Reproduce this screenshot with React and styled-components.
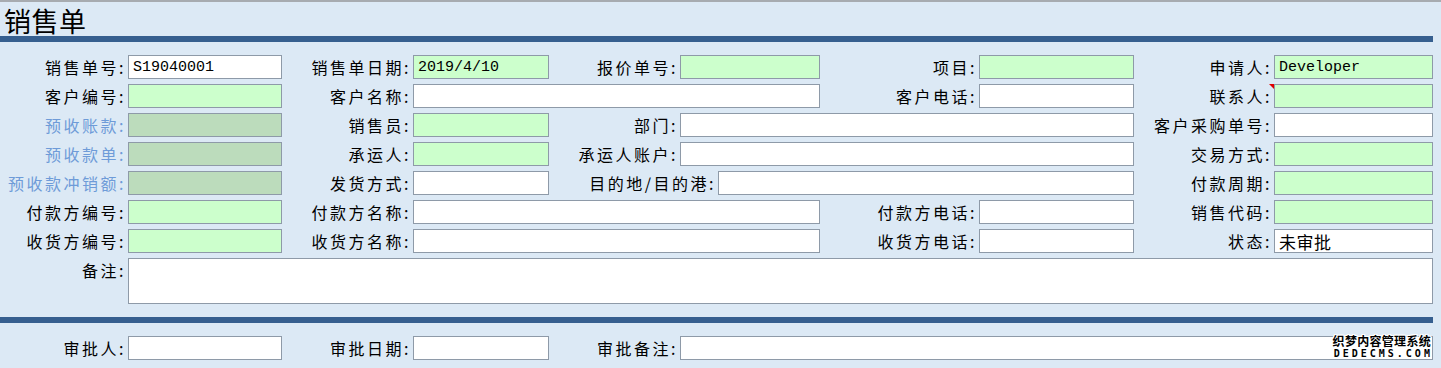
import React from "react";
import styled, { createGlobalStyle, css } from "styled-components";

const Global = createGlobalStyle`
  html, body { margin: 0; padding: 0; background: #dce9f5; }
  body { font-family: "Noto Sans CJK SC", "Noto Sans", sans-serif; }
  * { box-sizing: border-box; }
`;

const COLS = "128px 154px 131px 136px 131px 140px 159px 155px 140px 159px";

const Page = styled.div`
  position: relative;
  width: 1441px;
  height: 368px;
  background: #dce9f5;
  border-top: 2px solid #a7abb0;
  overflow: hidden;
`;

const Title = styled.h1`
  margin: 0;
  height: 34px;
  padding-left: 4px;
  font-family: "Noto Sans CJK SC", sans-serif;
  font-weight: 400;
  font-size: 27px;
  line-height: 38px;
  letter-spacing: 0.5px;
  color: #000;
  overflow: visible;
`;

const Bar = styled.div`
  width: 1433px;
  height: 6px;
  background: #365f8f;
`;

const Section = styled.div`
  padding: 13px 0;
`;

const Grid = styled.div`
  display: grid;
  width: 1433px;
  grid-template-columns: ${COLS};
  grid-auto-rows: 24px;
  grid-template-rows: ${(p) => p.$rows || "24px"};
  row-gap: 5px;
`;

const Label = styled.label`
  position: relative;
  display: flex;
  align-items: center;
  justify-content: flex-end;
  height: 24px;
  padding-right: 2px;
  white-space: nowrap;
  font-family: "Noto Sans CJK SC", sans-serif;
  font-size: 16px;
  letter-spacing: 2.5px;
  color: ${(p) => (p.$muted ? "#6e9bd8" : "#000")};
  ${(p) =>
    p.$flag &&
    css`
      &::after {
        content: "";
        position: absolute;
        right: 0;
        top: 0;
        width: 0;
        height: 0;
        border-top: 5px solid #e00000;
        border-left: 5px solid transparent;
      }
    `}
`;

const tones = {
  white: "#ffffff",
  green: "#ccffcc",
  dark: "#bcdcbc",
};

const Field = styled.input`
  grid-column: span ${(p) => p.$span || 1};
  width: ${(p) => (p.$w ? `${p.$w}px` : "100%")};
  height: 24px;
  margin: 0;
  padding: 1px 4px 0;
  border: 1px solid #8e9aa8;
  border-radius: 0;
  background: ${(p) => tones[p.$tone || "white"]};
  font-family: "Liberation Mono", "Noto Sans CJK SC", monospace;
  font-size: ${(p) => p.$size || 15}px;
  letter-spacing: ${(p) => (p.$size ? "0.5px" : "0")};
  color: #000;
  outline: none;
`;

const Memo = styled.textarea`
  grid-column: span 9;
  width: 100%;
  height: 46px;
  margin: 0;
  padding: 2px 4px;
  border: 1px solid #8e9aa8;
  background: #fff;
  resize: none;
  font-family: "Liberation Mono", "Noto Sans CJK SC", monospace;
  font-size: 15px;
`;

const Pair = styled.div`
  grid-column: span ${(p) => p.$span || 1};
  display: flex;
  justify-content: flex-end;
  align-items: center;
`;

const Watermark = styled.div`
  position: absolute;
  right: 10px;
  bottom: 9px;
  display: flex;
  flex-direction: column;
  align-items: center;
  line-height: 1;
  color: #000;
  font-weight: 700;
  text-shadow: 1px 0 0 #fff, -1px 0 0 #fff, 0 1px 0 #fff, 0 -1px 0 #fff,
    1px 1px 0 #fff, -1px -1px 0 #fff, 1px -1px 0 #fff, -1px 1px 0 #fff;
  pointer-events: none;
`;

const WmTop = styled.span`
  font-family: "Noto Sans CJK SC", sans-serif;
  font-size: 12px;
  letter-spacing: 0.3px;
  height: 13px;
`;

const WmBottom = styled.span`
  font-family: "DejaVu Sans Mono", monospace;
  font-size: 10px;
  letter-spacing: 3px;
  margin-top: 1px;
  margin-right: -3px;
`;

const L = ({ children, muted, flag }) => (
  <Label $muted={muted} $flag={flag}>
    {children}
  </Label>
);

export default function App() {
  return (
    <>
      <Global />
      <Page>
        <Title>销售单</Title>
        <Bar />
        <Section>
          <Grid $rows="repeat(7, 24px) 46px">
            <L>销售单号:</L>
            <Field defaultValue="S19040001" />
            <L>销售单日期:</L>
            <Field $tone="green" defaultValue="2019/4/10" />
            <L>报价单号:</L>
            <Field $tone="green" />
            <L>项目:</L>
            <Field $tone="green" />
            <L>申请人:</L>
            <Field $tone="green" defaultValue="Developer" />

            <L>客户编号:</L>
            <Field $tone="green" />
            <L>客户名称:</L>
            <Field $span={3} />
            <L>客户电话:</L>
            <Field />
            <L flag>联系人:</L>
            <Field $tone="green" />

            <L muted>预收账款:</L>
            <Field $tone="dark" />
            <L>销售员:</L>
            <Field $tone="green" />
            <L>部门:</L>
            <Field $span={3} />
            <L>客户采购单号:</L>
            <Field />

            <L muted>预收款单:</L>
            <Field $tone="dark" />
            <L>承运人:</L>
            <Field $tone="green" />
            <L>承运人账户:</L>
            <Field $span={3} />
            <L>交易方式:</L>
            <Field $tone="green" />

            <L muted>预收款冲销额:</L>
            <Field $tone="dark" />
            <L>发货方式:</L>
            <Field />
            <Pair $span={4}>
              <L>目的地/目的港:</L>
              <Field $w={416} />
            </Pair>
            <L>付款周期:</L>
            <Field $tone="green" />

            <L>付款方编号:</L>
            <Field $tone="green" />
            <L>付款方名称:</L>
            <Field $span={3} />
            <L>付款方电话:</L>
            <Field />
            <L>销售代码:</L>
            <Field $tone="green" />

            <L>收货方编号:</L>
            <Field $tone="green" />
            <L>收货方名称:</L>
            <Field $span={3} />
            <L>收货方电话:</L>
            <Field />
            <L>状态:</L>
            <Field $size={17} defaultValue="未审批" />

            <L>备注:</L>
            <Memo />
          </Grid>
        </Section>
        <Bar />
        <Section>
          <Grid>
            <L>审批人:</L>
            <Field />
            <L>审批日期:</L>
            <Field />
            <L>审批备注:</L>
            <Field $span={5} />
          </Grid>
        </Section>
        <Watermark>
          <WmTop>织梦内容管理系统</WmTop>
          <WmBottom>DEDECMS.COM</WmBottom>
        </Watermark>
      </Page>
    </>
  );
}
